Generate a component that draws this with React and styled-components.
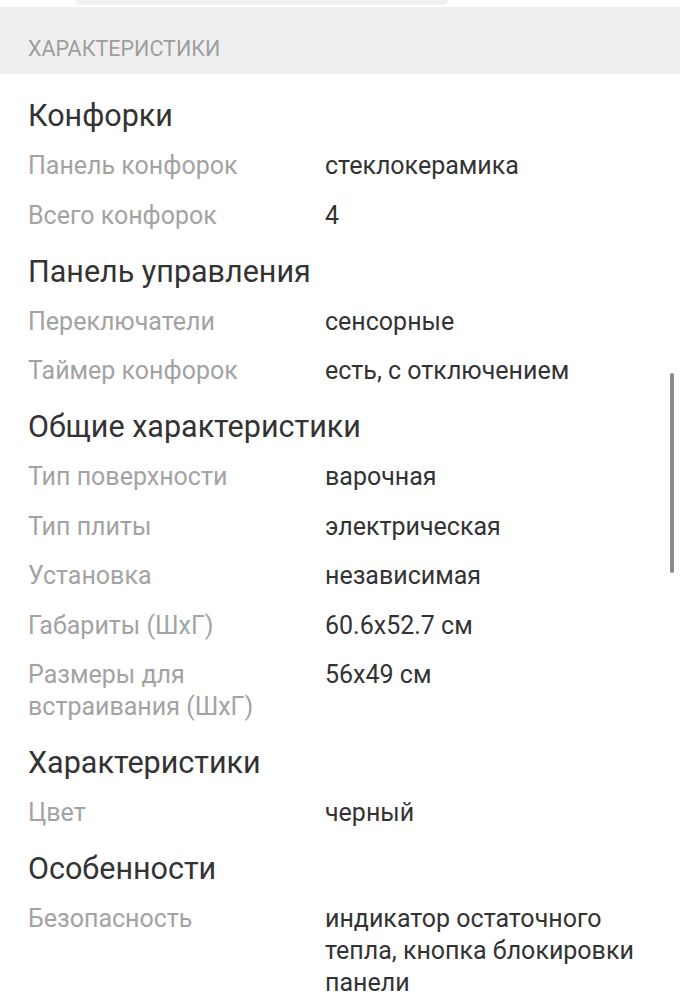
import React from 'react'
import styled, { createGlobalStyle } from 'styled-components'

const Global = createGlobalStyle`
  html, body {
    margin: 0;
    padding: 0;
    background: #fff;
    font-family: Roboto, "Noto Sans", Arial, sans-serif;
  }
`

const Screen = styled.div`
  position: relative;
  width: 680px;
  height: 1000px;
  overflow: hidden;
  background: #fff;
`

const TopStrip = styled.div`
  height: 7px;
  display: flex;
  padding-left: 75px;
`

const CardEdge = styled.div`
  width: 373px;
  height: 5px;
  background: #f1f1f1;
  border-bottom-left-radius: 12px;
  border-bottom-right-radius: 12px;
`

const SectionBar = styled.div`
  height: 67px;
  background: #efefef;
  display: flex;
  align-items: center;
  padding: 15px 28px 0;
  box-sizing: border-box;
  font-size: 21.5px;
  color: #9e9e9e;
`

const Body = styled.div`
  padding: 20px 28px 0;
`

const Group = styled.section`
  margin-bottom: 18px;
`

const GroupTitle = styled.h2`
  margin: 0;
  font-size: 30.5px;
  font-weight: 400;
  color: #333;
  line-height: 44px;
  height: 44px;
`

const Rows = styled.dl`
  margin: 0;
  display: grid;
  grid-template-columns: 297px 1fr;
  row-gap: 17.5px;
  padding: 12px 0 0;
`

const Label = styled.dt`
  font-size: 25px;
  line-height: 32px;
  color: #a3a3a3;
  padding-right: 16px;
`

const Value = styled.dd`
  margin: 0;
  font-size: 25px;
  line-height: 32px;
  color: #333;
  padding-right: 10px;
`

const Scrollbar = styled.div`
  position: absolute;
  right: 6px;
  top: 373px;
  width: 4px;
  height: 200px;
  border-radius: 2px;
  background: #8a8a8a;
`

const groups = [
  {
    title: 'Конфорки',
    rows: [
      ['Панель конфорок', 'стеклокерамика'],
      ['Всего конфорок', '4']
    ]
  },
  {
    title: 'Панель управления',
    rows: [
      ['Переключатели', 'сенсорные'],
      ['Таймер конфорок', 'есть, с отключением']
    ]
  },
  {
    title: 'Общие характеристики',
    rows: [
      ['Тип поверхности', 'варочная'],
      ['Тип плиты', 'электрическая'],
      ['Установка', 'независимая'],
      ['Габариты (ШхГ)', '60.6x52.7 см'],
      ['Размеры для встраивания (ШхГ)', '56x49 см']
    ]
  },
  {
    title: 'Характеристики',
    rows: [['Цвет', 'черный']]
  },
  {
    title: 'Особенности',
    rows: [['Безопасность', 'индикатор остаточного тепла, кнопка блокировки панели']]
  }
]

export default () => (
  <Screen>
    <Global />
    <TopStrip>
      <CardEdge />
    </TopStrip>
    <SectionBar>ХАРАКТЕРИСТИКИ</SectionBar>
    <Body>
      {groups.map((g, i) => (
        <Group key={i}>
          <GroupTitle>{g.title}</GroupTitle>
          <Rows>
            {g.rows.map(([l, v], j) => (
              <React.Fragment key={j}>
                <Label>{l}</Label>
                <Value>{v}</Value>
              </React.Fragment>
            ))}
          </Rows>
        </Group>
      ))}
    </Body>
    <Scrollbar />
  </Screen>
)
